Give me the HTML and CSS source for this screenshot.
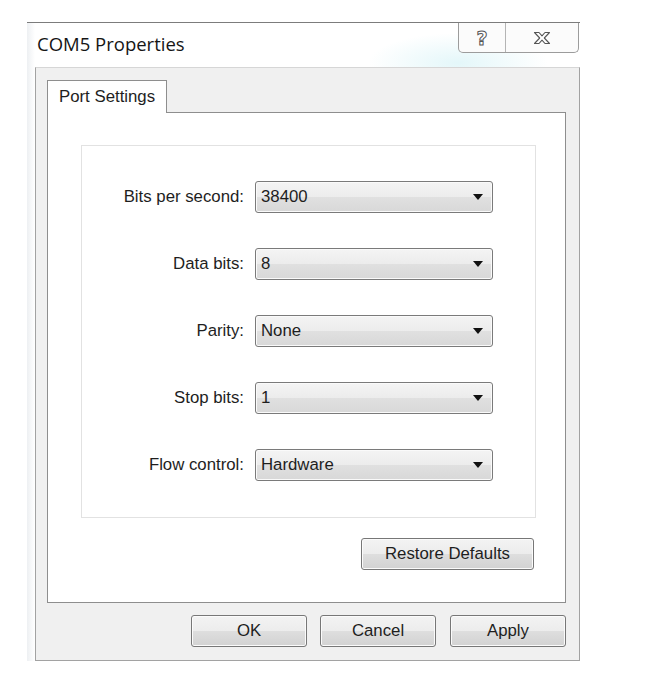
FILE: index.html
```html
<html lang="en">
  <head>
    <meta charset="utf-8">
    <link rel="stylesheet" href="styles.css">
  </head>
  <body>
    <div class="window">
      <div class="title-bar">
        <span class="title">COM5 Properties</span>
        <div class="caption-buttons">
          <span class="caption-btn help">?</span>
          <span class="caption-btn close">
            <svg width="18" height="14" viewBox="0 0 18 14">
              <path d="M1.5 1.5h4.5l3 3.3 3-3.3h4.5l-5.2 5.5 5.2 5.5h-4.5l-3-3.3-3 3.3h-4.5l5.2-5.5z" fill="#fff" stroke="#555" stroke-width="1.1" stroke-linejoin="round"/>
            </svg>
          </span>
        </div>
      </div>
      <div class="dialog">
        <div class="tabs">
          <div class="tab">Port Settings</div>
        </div>
        <div class="tab-panel">
          <div class="group">
            <div class="form-grid">
              <label>Bits per second:</label>
              <div class="combo"><span>38400</span><span class="arrow"></span></div>
              <label>Data bits:</label>
              <div class="combo"><span>8</span><span class="arrow"></span></div>
              <label>Parity:</label>
              <div class="combo"><span>None</span><span class="arrow"></span></div>
              <label>Stop bits:</label>
              <div class="combo"><span>1</span><span class="arrow"></span></div>
              <label>Flow control:</label>
              <div class="combo"><span>Hardware</span><span class="arrow"></span></div>
            </div>
          </div>
          <div class="panel-actions">
            <button class="restore-button">Restore Defaults</button>
          </div>
        </div>
        <div class="dialog-actions">
          <button>OK</button>
          <button>Cancel</button>
          <button>Apply</button>
        </div>
      </div>
    </div>
  </body>
</html>
```

FILE: styles.css
```css
body {
  margin: 0;
  background-color: #fff;
  color: #1e1e1e;
  font-family: "Liberation Sans", Arial, sans-serif;
  font-size: 16.8px;
}

.window {
  width: 553px;
  margin: 22px 0 0 27px;
  border-top: 1px solid #7c7c7c;
  background:
    radial-gradient(ellipse 90px 30px at 78% 40px, rgba(205, 240, 245, 0.55), transparent),
    linear-gradient(90deg, rgba(220, 225, 230, 0.5), transparent 8px);
}

.title-bar {
  display: flex;
  justify-content: space-between;
  height: 44px;
}

.title {
  font-family: "Open Sans", "Noto Sans", sans-serif;
  font-size: 18.5px;
  color: #151515;
  margin: 8px 0 0 10px;
}

.caption-buttons {
  display: flex;
  height: 29px;
  margin-right: 1px;
  border: 1px solid #9c9c9c;
  border-top: none;
  border-radius: 0 0 5px 5px;
  background-color: #fbfbfb;
}

.caption-btn {
  display: flex;
  align-items: center;
  justify-content: center;
}

.caption-btn.help {
  width: 46px;
  border-right: 1px solid #b4b4b4;
  font-family: "DejaVu Sans", sans-serif;
  font-size: 19px;
  font-weight: bold;
  color: #fff;
  -webkit-text-stroke: 1px #555;
}

.caption-btn.close {
  width: 72px;
}

.dialog {
  box-sizing: border-box;
  width: 545px;
  margin-left: 8px;
  padding: 12px 13px 13px 11px;
  background-color: #f0f0f0;
  border: 1px solid #a2a2a2;
  border-top-color: #d6d6d6;
}

.tabs {
  display: flex;
}

.tab {
  box-sizing: border-box;
  width: 120px;
  height: 33px;
  margin-bottom: -1px;
  padding: 6px 0 0 11px;
  background-color: #fff;
  border: 1px solid #8e8e8e;
  border-bottom: none;
  position: relative;
}

.tab-panel {
  box-sizing: border-box;
  height: 491px;
  background-color: #fff;
  border: 1px solid #8e8e8e;
  padding: 32px 29px 0 33px;
}

.group {
  box-sizing: border-box;
  height: 373px;
  border: 1px solid #e2e2e2;
  padding-top: 35px;
}

.form-grid {
  display: grid;
  grid-template-columns: 162px 238px;
  grid-auto-rows: 32px;
  column-gap: 11px;
  row-gap: 35px;
  align-items: center;
}

.form-grid label {
  text-align: right;
}

.combo {
  box-sizing: border-box;
  height: 32px;
  display: flex;
  align-items: center;
  justify-content: space-between;
  padding: 0 9px 0 5px;
  border: 1px solid #7a7a7a;
  border-radius: 3px;
  background: linear-gradient(#f4f4f4, #ececec 50%, #e0e0e0 51%, #d8d8d8);
  box-shadow: inset 0 0 0 1px #fafafa;
}

.arrow {
  width: 0;
  height: 0;
  border-left: 5px solid transparent;
  border-right: 5px solid transparent;
  border-top: 6px solid #111;
}

.panel-actions {
  display: flex;
  justify-content: flex-end;
  margin-top: 20px;
  padding-right: 2px;
}

button {
  box-sizing: border-box;
  height: 32px;
  font-family: "Liberation Sans", Arial, sans-serif;
  font-size: 16.8px;
  color: #1e1e1e;
  border: 1px solid #777;
  border-radius: 3px;
  background: linear-gradient(#f3f3f3, #ececec 50%, #dedede 51%, #d2d2d2);
  box-shadow: inset 0 0 0 1px #fbfbfb;
  padding: 0;
}

.restore-button {
  width: 173px;
}

.dialog-actions {
  display: flex;
  justify-content: flex-end;
  gap: 14px;
  margin-top: 12px;
}

.dialog-actions button {
  width: 116px;
}

.dialog-actions button:first-child {
  margin-right: -1px;
}
```
